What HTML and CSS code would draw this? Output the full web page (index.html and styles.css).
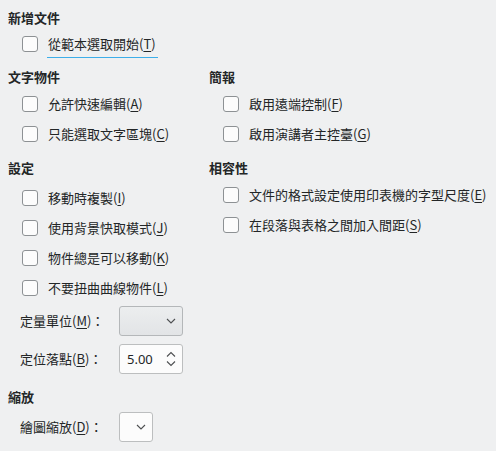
FILE: index.html
```html
<!DOCTYPE html>
<html lang="zh-Hant">
<head>
<meta charset="utf-8">
<link rel="stylesheet" href="styles.css">
</head>
<body>
<div class="page">
  <section class="group first">
    <h3 class="heading">新增文件</h3>
    <div class="check focused"><span class="box"></span><span class="text">從範本選取開始(<u>T</u>)</span></div>
  </section>

  <div class="cols sec2">
    <section class="group">
      <h3 class="heading">文字物件</h3>
      <div class="check"><span class="box"></span><span class="text">允許快速編輯(<u>A</u>)</span></div>
      <div class="check"><span class="box"></span><span class="text">只能選取文字區塊(<u>C</u>)</span></div>
    </section>
    <section class="group">
      <h3 class="heading">簡報</h3>
      <div class="check"><span class="box"></span><span class="text">啟用遠端控制(<u>F</u>)</span></div>
      <div class="check"><span class="box"></span><span class="text">啟用演講者主控臺(<u>G</u>)</span></div>
    </section>
  </div>

  <div class="cols sec3">
    <section class="group settings">
      <h3 class="heading">設定</h3>
      <div class="check"><span class="box"></span><span class="text">移動時複製(<u>I</u>)</span></div>
      <div class="check"><span class="box"></span><span class="text">使用背景快取模式(<u>J</u>)</span></div>
      <div class="check"><span class="box"></span><span class="text">物件總是可以移動(<u>K</u>)</span></div>
      <div class="check"><span class="box"></span><span class="text">不要扭曲曲線物件(<u>L</u>)</span></div>
    </section>
    <section class="group">
      <h3 class="heading">相容性</h3>
      <div class="check"><span class="box"></span><span class="text">文件的格式設定使用印表機的字型尺度(<u>E</u>)</span></div>
      <div class="check"><span class="box"></span><span class="text">在段落與表格之間加入間距(<u>S</u>)</span></div>
    </section>
  </div>

  <div class="form">
    <span class="flabel">定量單位(<u>M</u>)：</span>
    <div class="combo gray wide">
      <svg class="chev" width="10" height="6" viewBox="0 0 10 6"><path d="M1 1 L5 5 L9 1" fill="none" stroke="#4d4f51" stroke-width="1.1"/></svg>
    </div>
    <span class="flabel">定位落點(<u>B</u>)：</span>
    <div class="spin">
      <span class="val">5.00</span>
      <svg class="arrows" width="10" height="16" viewBox="0 0 10 16"><path d="M1 5.5 L5 1.5 L9 5.5" fill="none" stroke="#4d4f51" stroke-width="1.1"/><path d="M1 10.5 L5 14.5 L9 10.5" fill="none" stroke="#4d4f51" stroke-width="1.1"/></svg>
    </div>
  </div>

  <section class="group zoom">
    <h3 class="heading">縮放</h3>
    <div class="form single">
      <span class="flabel">繪圖縮放(<u>D</u>)：</span>
      <div class="combo narrow">
        <svg class="chev" width="10" height="6" viewBox="0 0 10 6"><path d="M1 1 L5 5 L9 1" fill="none" stroke="#4d4f51" stroke-width="1.1"/></svg>
      </div>
    </div>
  </section>
</div>
</body>
</html>
```

FILE: styles.css
```css
html, body {
  margin: 0;
  padding: 0;
  background: #eff0f1;
}
body {
  width: 496px;
  height: 451px;
  overflow: hidden;
  font-family: "Noto Sans CJK TC", "Noto Sans", sans-serif;
  font-size: 13px;
  color: #232627;
}
.page {
  padding: 8px 0 0 8px;
  display: flex;
  flex-direction: column;
}
.heading {
  margin: 0;
  font-size: 13px;
  font-weight: bold;
  line-height: 20px;
  height: 20px;
}
.group {
  display: flex;
  flex-direction: column;
}
.group .heading {
  margin-bottom: 2px;
}
.group.first .heading {
  margin-bottom: 1px;
}
.settings .heading {
  margin-bottom: 5px;
}
.check {
  display: flex;
  align-items: center;
  height: 30px;
  padding-left: 14px;
  white-space: nowrap;
}
.box {
  width: 14px;
  height: 14px;
  border: 1px solid #8d9194;
  border-radius: 3px;
  background: #fcfcfc;
  flex: none;
}
.text {
  margin-left: 10px;
  line-height: 18px;
}
.check.focused .text {
  position: relative;
}
.check.focused .text::after {
  content: "";
  position: absolute;
  left: -1px;
  right: -2px;
  bottom: -5px;
  height: 1px;
  background: #3daee9;
}
u {
  text-decoration-thickness: 1px;
  text-underline-offset: 2px;
}
.cols {
  display: grid;
  grid-template-columns: 201px 1fr;
}
.sec2 {
  margin-top: 8px;
}
.sec3 {
  margin-top: 9px;
}
.form {
  display: grid;
  grid-template-columns: 99px 64px;
  grid-auto-rows: 30px;
  row-gap: 8px;
  align-items: center;
  margin-top: 3px;
  padding-left: 12px;
}
.form.single {
  margin-top: 3px;
  grid-template-columns: 99px 34px;
}
.flabel {
  white-space: nowrap;
  line-height: 18px;
}
.combo {
  height: 28px;
  border: 1px solid #bcbebf;
  border-radius: 3px;
  background: #fcfcfc;
  display: flex;
  align-items: center;
  justify-content: flex-end;
  box-sizing: content-box;
}
.combo.wide {
  width: 62px;
  padding-right: 0;
}
.combo.gray {
  background: linear-gradient(#eceeef, #e2e4e6);
  border-color: #b4b7b9;
}
.combo.wide .chev {
  margin-right: 6px;
}
.combo.narrow {
  width: 32px;
}
.combo.narrow .chev {
  margin-right: 6px;
}
.spin {
  height: 28px;
  width: 62px;
  border: 1px solid #bcbebf;
  border-radius: 3px;
  background: #fcfcfc;
  display: flex;
  align-items: center;
  justify-content: space-between;
}
.spin .val {
  margin-left: 7px;
  font-family: "Noto Sans", sans-serif;
  font-size: 13px;
}
.spin .arrows {
  margin-right: 6px;
}
.zoom {
  margin-top: 13px;
}
.zoom .heading {
  margin-bottom: 2px;
}
```
